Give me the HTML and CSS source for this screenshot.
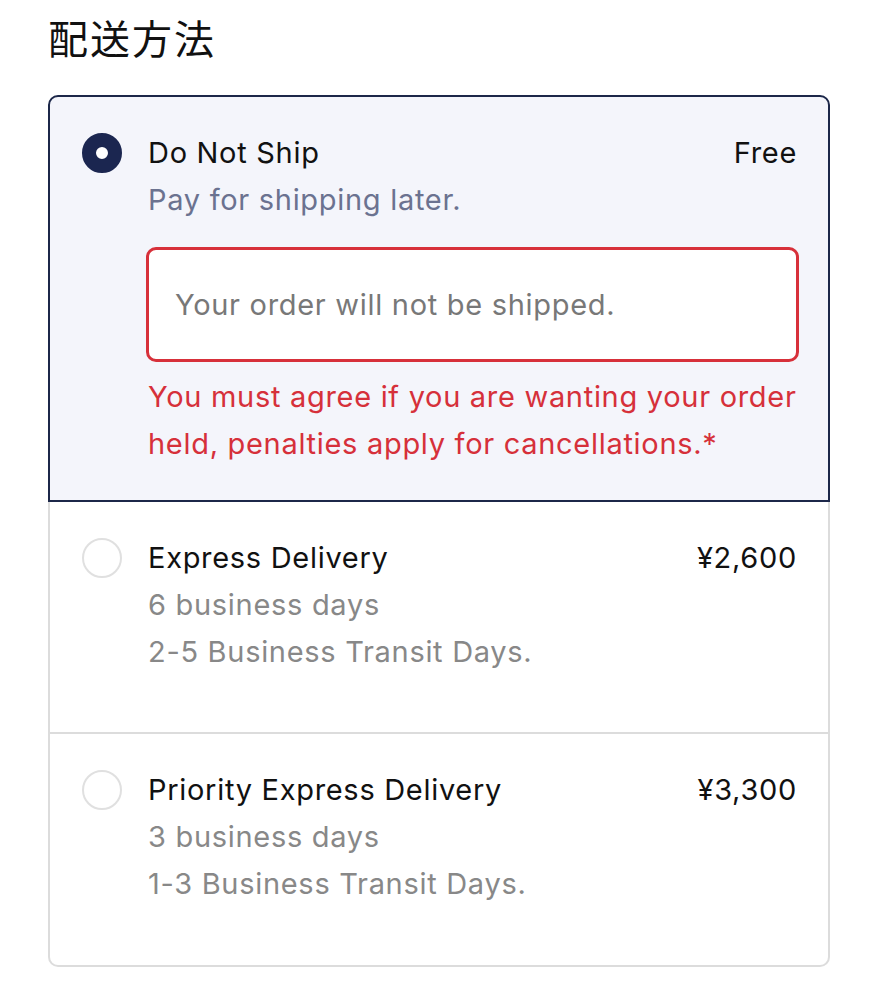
FILE: index.html
```html
<!DOCTYPE html>
<html lang="ja">
<head>
<meta charset="utf-8">
<link rel="stylesheet" href="styles.css">
</head>
<body>
<main class="page">
  <h1 class="heading">配送方法</h1>
  <div class="options">
    <div class="option selected">
      <span class="radio checked"></span>
      <div class="body">
        <div class="top">
          <span class="title">Do Not Ship</span>
          <span class="price">Free</span>
        </div>
        <div class="sub sub-blue">Pay for shipping later.</div>
        <div class="notice">Your order will not be shipped.</div>
        <div class="error">You must agree if you are wanting your order held, penalties apply for cancellations.*</div>
      </div>
    </div>
    <div class="option">
      <span class="radio"></span>
      <div class="body">
        <div class="top">
          <span class="title">Express Delivery</span>
          <span class="price">¥2,600</span>
        </div>
        <div class="sub">6 business days</div>
        <div class="sub">2-5 Business Transit Days.</div>
      </div>
    </div>
    <div class="option last">
      <span class="radio"></span>
      <div class="body">
        <div class="top">
          <span class="title">Priority Express Delivery</span>
          <span class="price">¥3,300</span>
        </div>
        <div class="sub">3 business days</div>
        <div class="sub">1-3 Business Transit Days.</div>
      </div>
    </div>
  </div>
</main>
</body>
</html>
```
FILE: styles.css
```css
html, body {
  margin: 0;
  padding: 0;
  background: #ffffff;
}
body {
  font-family: Inter, "Noto Sans CJK JP", sans-serif;
  color: #111111;
}
.page {
  padding: 0 48px 0 48px;
}
.heading {
  margin: 0;
  padding-top: 12px;
  height: 95px;
  box-sizing: border-box;
  font-family: "Noto Sans CJK JP", sans-serif;
  font-size: 40px;
  font-weight: 400;
  line-height: 50px;
  letter-spacing: 2px;
}
.options {
  width: 782px;
  box-sizing: border-box;
}
.option {
  display: flex;
  gap: 26px;
  padding: 32px 31px 57px 32px;
  border: 2px solid #dcdcdc;
  border-top: none;
  font-size: 29px;
  letter-spacing: 0.7px;
  line-height: 47px;
}
.option.selected {
  background: #f4f5fb;
  border: 2px solid #1c2749;
  border-radius: 10px 10px 0 0;
  padding-top: 32px;
  padding-bottom: 33px;
}
.option.last {
  border-radius: 0 0 10px 10px;
  padding-bottom: 58px;
}
.radio {
  flex: none;
  width: 40px;
  height: 40px;
  margin-top: 4px;
  box-sizing: border-box;
  border-radius: 50%;
  border: 2px solid #e0e0e0;
  background: #fff;
}
.radio.checked {
  border: 14px solid #1b2650;
  background: #ffffff;
}
.body {
  flex: 1;
  min-width: 0;
}
.top {
  display: flex;
  justify-content: space-between;
}
.title {
  color: #111;
}
.price {
  color: #111;
}
.sub {
  color: #888888;
}
.sub-blue {
  color: #6b7290;
}
.notice {
  margin: 24px -2px 0 -2px;
  height: 115px;
  box-sizing: border-box;
  border: 3px solid #d7303a;
  border-radius: 10px;
  background: #ffffff;
  color: #787878;
  padding: 0 26px;
  display: flex;
  align-items: center;
}
.error {
  margin-top: 11px;
  color: #d6303a;
}
```
